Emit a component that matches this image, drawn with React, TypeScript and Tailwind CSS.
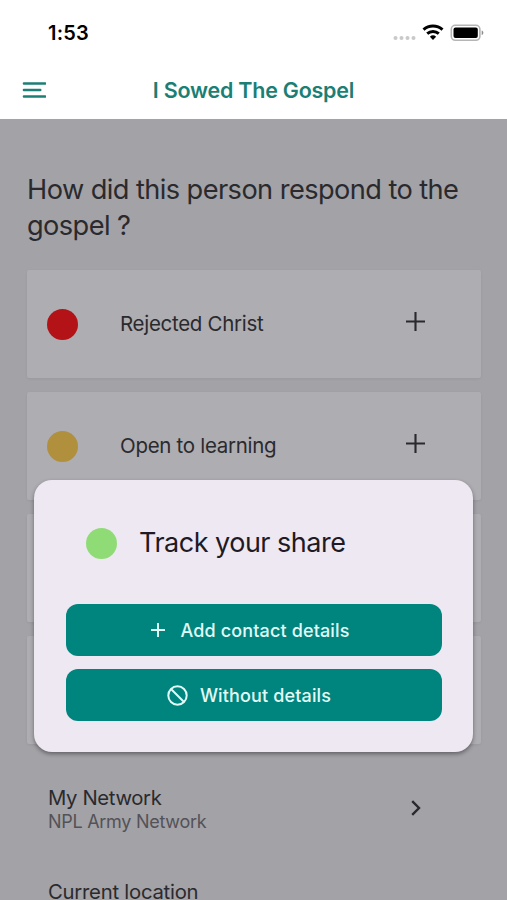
import clsx from "clsx";

const responses = [
  { label: "Rejected Christ", dot: "bg-[#b31217]" },
  { label: "Open to learning", dot: "bg-[#b1903d]" },
  {},
  {},
];

function PlusIcon({ className }: { className?: string }) {
  return (
    <svg viewBox="0 0 18 18" fill="none" stroke="currentColor" className={className}>
      <path d="M9 0v18M0 9h18" />
    </svg>
  );
}

function StatusBar() {
  return (
    <div className="flex h-16 items-start justify-between pt-[22px] pr-[23px] pl-12">
      <span className="text-[20px] leading-[23px] font-semibold tracking-[0.2px] text-black">1:53</span>
      <svg width="92" height="22" viewBox="0 0 92 22" fill="none">
        <g fill="#c9c9c9">
          <circle cx="3.5" cy="16" r="2" />
          <circle cx="9.5" cy="16" r="2" />
          <circle cx="15.5" cy="16" r="2" />
          <circle cx="21.5" cy="16" r="2" />
        </g>
        <g stroke="#000" strokeWidth="2.9">
          <path d="M31.5 7.7a14.2 14.2 0 0 1 19 0" />
          <path d="M35.2 11.7a8.7 8.7 0 0 1 11.6 0" />
        </g>
        <path d="M41 18l-3.1-3.3a4.6 4.6 0 0 1 6.2 0z" fill="#000" />
        <rect x="59.3" y="3.3" width="28.6" height="15" rx="4" stroke="#b5b5b5" strokeWidth="1.6" />
        <rect x="61.5" y="5.5" width="24.3" height="10.6" rx="2" fill="#000" />
        <path d="M89.7 8.6c2.2.7 2.2 3.8 0 4.5z" fill="#8d8d8d" />
      </svg>
    </div>
  );
}

function Header() {
  return (
    <div className="flex h-[55px] items-center px-[22px] pb-[3px] text-[#1b7f75]">
      <svg width="24" height="18" viewBox="0 0 24 18" fill="none" stroke="currentColor" strokeWidth="2.4" strokeLinecap="round">
        <path d="M1.9 2.5h21.2M1.9 9h16.4M1.9 15.5h21.2" />
      </svg>
      <h1 className="flex-1 pr-6 text-center text-[21.5px] font-semibold tracking-[-0.24px]">I Sowed The Gospel</h1>
    </div>
  );
}

function TrackDialog() {
  return (
    <div className="absolute top-[480px] left-[34px] h-[272px] w-[439px] rounded-[18px] bg-[#eee8f2] pt-[45px] pr-[31px] pl-8 shadow-[0_2px_4px_rgba(0,0,0,0.4)]">
      <div className="flex items-center gap-[22px] pl-5">
        <span className="size-[31px] rounded-full bg-[#8fdc76]" />
        <h3 className="text-[27px] leading-9 tracking-[-0.5px] text-[#1f1a24]">Track your share</h3>
      </div>
      <div className="mt-[43px] flex flex-col gap-[13px] text-[18px] font-medium tracking-[0.14px] text-[#e2faf6]">
        <button className="flex h-13 items-center justify-center gap-[15px] rounded-xl bg-[#00847e] pr-[7px]">
          <PlusIcon className="size-3.5 stroke-[2.5px]" />
          Add contact details
        </button>
        <button className="flex h-13 items-center justify-center gap-3 rounded-xl bg-[#00847e] pr-[10px]">
          <svg className="size-[21px]" viewBox="0 0 21 21" fill="none" stroke="currentColor" strokeWidth="2">
            <circle cx="10.5" cy="10.5" r="9.2" />
            <path d="M4 4l13 13" />
          </svg>
          Without details
        </button>
      </div>
    </div>
  );
}

export default function App() {
  return (
    <div className="relative flex h-[900px] w-[507px] flex-col overflow-hidden bg-white font-['Inter',sans-serif]">
      <StatusBar />
      <Header />
      <main className="h-[781px] overflow-hidden bg-[#a3a2a7] px-[27px] pt-[53px] text-[#2a2a2e]">
        <h2 className="text-[27.2px] leading-9 tracking-[-0.57px] whitespace-nowrap">
          How did this person respond to the
          <br />
          gospel ?
        </h2>
        <div className="mt-[26px] flex flex-col gap-[14px]">
          {responses.map((item, i) => (
            <div key={i} className="flex h-[108px] w-[454px] items-center rounded-xs bg-[#aeadb1] pl-5 shadow-[0_1px_3px_rgba(0,0,0,0.06)]">
              {item.label && (
                <>
                  <span className={clsx("size-[31px] rounded-full", item.dot)} />
                  <span className="w-[328px] pl-[42px] text-[20.5px] tracking-[-0.3px]">{item.label}</span>
                  <PlusIcon className="mb-1.5 size-[19px] stroke-[2px]" />
                </>
              )}
            </div>
          ))}
        </div>
        <div className="mt-[42px] flex items-start justify-between pr-[59px] pl-[21px]">
          <div>
            <p className="text-[20.3px] leading-6 tracking-[-0.36px]">My Network</p>
            <p className="text-[18px] leading-[23px] tracking-[-0.28px] text-[#535257]">NPL Army Network</p>
          </div>
          <svg className="mt-3.5" width="10" height="16" viewBox="0 0 10 16" fill="none" stroke="currentColor" strokeWidth="2.4">
            <path d="M1.2 1.2L8 8l-6.8 6.8" />
          </svg>
        </div>
        <p className="mt-[47px] pl-[21px] text-[20.3px] leading-6 tracking-[-0.24px]">Current location</p>
      </main>
      <TrackDialog />
    </div>
  );
}
